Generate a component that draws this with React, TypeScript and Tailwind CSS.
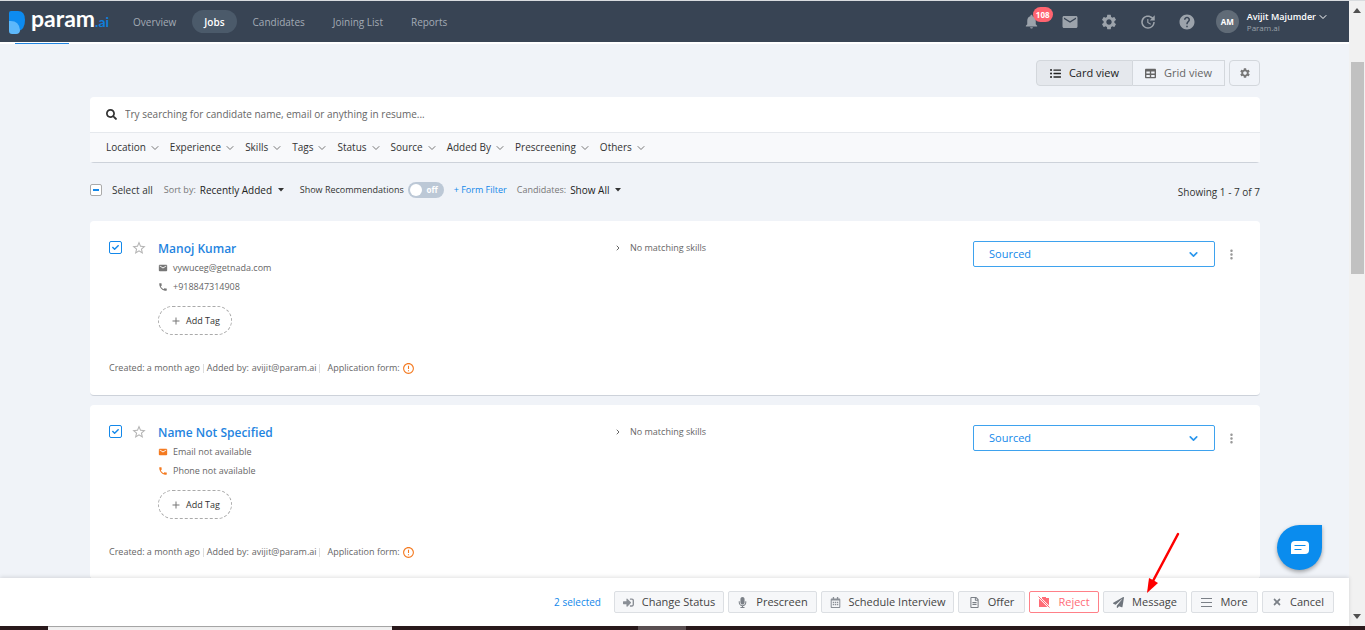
import React from "react";
import {
  MdAdd,
  MdEmail,
  MdErrorOutline,
  MdHelp,
  MdMoreVert,
  MdNotifications,
  MdPhone,
  MdSettings,
  MdStarBorder,
  MdUpdate,
} from "react-icons/md";
import {
  FaCheck,
  FaListUl,
  FaMicrophone,
  FaPaperPlane,
  FaRegCalendarAlt,
  FaRegFileAlt,
  FaSearch,
  FaSignInAlt,
  FaTable,
  FaTimes,
} from "react-icons/fa";
import { FiChevronDown, FiChevronRight } from "react-icons/fi";

const navItems = ["Overview", "Jobs", "Candidates", "Joining List", "Reports"];

const filters = [
  "Location",
  "Experience",
  "Skills",
  "Tags",
  "Status",
  "Source",
  "Added By",
  "Prescreening",
  "Others",
];

type Candidate = {
  id: string;
  name: string;
  email?: string;
  phone?: string;
};

const candidates: Candidate[] = [
  { id: "c1", name: "Manoj Kumar", email: "vywuceg@getnada.com", phone: "+918847314908" },
  { id: "c2", name: "Name Not Specified" },
];

function Logo() {
  return (
    <a href="#home" className="flex h-full w-[102px] shrink-0 items-center" aria-label="param.ai">
      <svg width="17" height="24" viewBox="0 0 17 24" className="mt-[2px] shrink-0" aria-hidden="true">
        <path d="M0 2Q0 0 2 0H9Q16 0 16 9Q16 19 9 20H0Z" fill="#0d8bf0" />
        <path d="M0 10Q10 9 11 19Q11 23 7 23H3Q0 23 0 20Z" fill="#5db8fb" />
      </svg>
      <span className="mb-1 ml-[5px] flex items-baseline font-[Lato,sans-serif] leading-6 text-white">
        <span className="text-[23px] font-bold">param</span>
        <span className="text-[14px] font-bold text-[#0f7fdb]">.ai</span>
      </span>
    </a>
  );
}

function Header() {
  return (
    <header className="flex h-[41px] shrink-0 items-center bg-[#384454] pr-5 pl-[9px]">
      <Logo />
      <nav className="ml-[10px] flex items-center gap-1">
        {navItems.map((item) => (
          <a
            key={item}
            href={"#" + item}
            className={
              item === "Jobs"
                ? "rounded-full bg-[#4b5a6a] px-3 pt-[5px] pb-[3px] text-[10px] leading-[15px] font-semibold text-white"
                : "px-3 pt-[5px] pb-[3px] text-[10px] leading-[15px] text-[#a3abb4]"
            }
          >
            {item}
          </a>
        ))}
      </nav>
      <div className="ml-auto flex items-center text-[#9ca3ab]">
        <button aria-label="Notifications" className="relative mr-[21px]">
          <MdNotifications size={17} />
          <span className="absolute -top-[6px] left-[10px] rounded-full bg-[#ff6470] px-[3px] text-[8px] leading-[15px] font-bold text-white">
            108
          </span>
        </button>
        <button aria-label="Mail" className="mr-[21px]">
          <MdEmail size={18} />
        </button>
        <button aria-label="Settings" className="mr-[21px]">
          <MdSettings size={18} />
        </button>
        <button aria-label="Recent" className="mr-[21px]">
          <MdUpdate size={18} />
        </button>
        <button aria-label="Help" className="mr-[20px]">
          <MdHelp size={18} />
        </button>
        <button className="flex items-center text-left">
          <span className="flex size-[23px] items-center justify-center rounded-full bg-[#606b77] text-[8px] font-bold text-white">
            AM
          </span>
          <span className="ml-2 flex flex-col">
            <span className="flex items-center gap-px text-[9px] leading-3 font-semibold text-white">
              Avijit Majumder <FiChevronDown size={12} />
            </span>
            <span className="text-[8px] leading-[10px]">Param.ai</span>
          </span>
        </button>
      </div>
    </header>
  );
}

function ViewSwitch() {
  return (
    <div className="flex justify-end pt-4">
      <button className="flex h-[26px] w-[97px] items-center justify-center gap-2 rounded-l-sm border border-[#d3d7dc] bg-[#e5e8ed] text-[11px] text-[#222]">
        <FaListUl size={11} /> Card view
      </button>
      <button className="flex h-[26px] w-[92px] items-center justify-center gap-2 border border-l-0 border-[#d3d7dc] text-[11px] text-[#666]">
        <FaTable size={11} /> Grid view
      </button>
      <button
        aria-label="View settings"
        className="ml-1 flex h-[26px] w-[31px] items-center justify-center rounded-sm border border-[#d3d7dc] text-[#777]"
      >
        <MdSettings size={12} />
      </button>
    </div>
  );
}

function SearchPanel() {
  return (
    <section className="mt-[11px] rounded-sm border-b border-[#cdd2da] bg-white">
      <label className="flex h-[35px] items-center gap-2 pl-4">
        <FaSearch size={11} className="text-[#333]" aria-hidden="true" />
        <input
          type="text"
          aria-label="Search candidates"
          placeholder="Try searching for candidate name, email or anything in resume..."
          className="flex-1 bg-transparent text-[10px] outline-none placeholder:text-[#666]"
        />
      </label>
      <div className="flex h-[30px] items-center gap-[9px] border-t border-[#e6e9ed] bg-[#f8f9fb] pl-4">
        {filters.map((f) => (
          <button key={f} className="flex items-center gap-[3px] text-[10px] text-[#333]">
            {f} <FiChevronDown size={12} className="text-[#777]" />
          </button>
        ))}
      </div>
    </section>
  );
}

function Caret() {
  return (
    <svg width="6" height="4" viewBox="0 0 6 4" className="ml-px" aria-hidden="true">
      <path d="M0 0H6L3 3.5Z" fill="#333" />
    </svg>
  );
}

function ListControls() {
  return (
    <div className="flex h-[58px] items-center pb-1 text-[10px] text-[#333]">
      <label className="flex items-center gap-[10px] text-[10px]">
        <span className="relative flex size-3">
          <input
            type="checkbox"
            className="size-3 appearance-none rounded-[2px] border border-[#aaa] bg-white"
          />
          <span className="pointer-events-none absolute top-[5px] left-[3px] h-[2px] w-[6px] bg-[#1388ea]" />
        </span>
        Select all
      </label>
      <label className="ml-[11px] flex items-center gap-1 text-[9px] text-[#777]">
        Sort by:
        <select className="appearance-none text-[10px] text-[#222]">
          <option>Recently Added</option>
        </select>
        <Caret />
      </label>
      <label className="ml-4 flex items-center gap-1 text-[9px]">
        Show Recommendations
        <span className="relative flex">
          <input type="checkbox" role="switch" className="h-4 w-9 appearance-none rounded-full bg-[#bcc8d6]" />
          <span className="pointer-events-none absolute top-[2px] left-[2px] size-3 rounded-full bg-white" />
          <span className="pointer-events-none absolute top-0 right-[6px] text-[8px] leading-4 font-bold text-white">
            off
          </span>
        </span>
      </label>
      <button className="ml-[10px] text-[9px] text-[#1388ea]">+ Form Filter</button>
      <label className="ml-[10px] flex items-center gap-1 text-[9px] text-[#777]">
        Candidates:
        <select className="appearance-none text-[10px] text-[#222]">
          <option>Show All</option>
        </select>
        <Caret />
      </label>
      <span className="ml-auto pt-1">Showing 1 - 7 of 7</span>
    </div>
  );
}

function CandidateCard({ candidate }: { candidate: Candidate }) {
  const iconColor = candidate.email ? "text-[#777]" : "text-[#f47a20]";
  return (
    <article className="flex h-[175px] shrink-0 flex-col rounded-sm border-b border-[#cdd2da] bg-white pt-[19px] pl-[19px]">
      <div className="flex items-start">
        <span className="relative mt-px flex size-[13px]">
          <input
            type="checkbox"
            defaultChecked
            aria-label={"Select " + candidate.name}
            className="size-[13px] appearance-none rounded-[2px] border border-[#1388ea] bg-white"
          />
          <FaCheck size={7} className="pointer-events-none absolute top-[3px] left-[3px] text-[#1388ea]" />
        </span>
        <button aria-label="Favourite" className="ml-[9px] text-[#b5b5b5]">
          <MdStarBorder size={16} />
        </button>
        <div className="mt-px ml-[11px] w-[459px]">
          <h2 className="text-[12px] leading-4 font-semibold text-[#1f84e0]">
            <a href={"#" + candidate.id}>{candidate.name}</a>
          </h2>
          <ul className="mt-[1px] text-[9px] leading-[19px] text-[#666]">
            <li className="flex items-center gap-[5px]">
              <MdEmail size={10} className={iconColor} />
              {candidate.email ?? "Email not available"}
            </li>
            <li className="flex items-center gap-[5px]">
              <MdPhone size={10} className={iconColor} />
              {candidate.phone ?? "Phone not available"}
            </li>
          </ul>
          <button className="mt-[10px] flex h-[29px] w-[74px] items-center justify-center gap-1 rounded-full border border-dashed border-[#aaa] text-[9px] text-[#333]">
            <MdAdd size={12} className="text-[#777]" /> Add Tag
          </button>
        </div>
        <button className="mt-px -ml-[3px] flex items-center gap-2 text-[9px] leading-[14px] text-[#666]">
          <FiChevronRight size={8} strokeWidth={3} /> No matching skills
        </button>
        <div className="mt-px ml-auto flex items-center pr-[21px]">
          <div className="relative flex">
            <select
              aria-label="Candidate status"
              className="h-[26px] w-[242px] appearance-none rounded-xs border border-[#3ea2ee] bg-white pl-[15px] text-[11px] text-[#1388ea]"
            >
              <option>Sourced</option>
            </select>
            <FiChevronDown
              size={13}
              strokeWidth={3}
              className="pointer-events-none absolute top-[7px] right-[15px] text-[#2a96ec]"
            />
          </div>
          <button aria-label="More options" className="ml-[9px] text-[#999]">
            <MdMoreVert size={15} />
          </button>
        </div>
      </div>
      <footer className="mt-[26px] flex items-center text-[9px] leading-[14px] text-[#666]">
        <span>Created: a month ago</span>
        <span className="ml-[3px] flex h-[9px] items-center border-l border-[#ddd] pl-[3px]">Added by:</span>
        <span className="ml-[3px] flex h-[9px] items-center border-r border-[#ddd] pr-[2px]">avijit@param.ai</span>
        <span className="ml-2">Application form:</span>
        <MdErrorOutline size={13} className="ml-[2px] text-[#f47a20]" />
      </footer>
    </article>
  );
}

function RejectIcon() {
  return (
    <svg width="12" height="12" viewBox="0 0 12 12" aria-hidden="true">
      <path d="M4 2V1H8V2H11V9.5L3.5 2Z M1 2.5L9.5 11H1Z" fill="currentColor" />
      <path d="M0.5 0.5L11.5 11.5" stroke="currentColor" strokeWidth="1" />
    </svg>
  );
}

function LinesIcon() {
  return (
    <svg width="11" height="10" viewBox="0 0 11 10" aria-hidden="true">
      <path d="M0 1.500H11M0 5.500H11M0 9.500H11" stroke="#7b8087" strokeWidth="1" />
    </svg>
  );
}

const actionBase =
  "flex h-[22px] shrink-0 items-center justify-center gap-2 rounded-[2px] border text-[11px]";

function ActionBar() {
  const plain = " border-[#dcdfe3] bg-[#f6f7f9] text-[#444]";
  return (
    <div className="relative flex h-12 shrink-0 items-center justify-end gap-1 bg-white pr-[15px] shadow-[0_-1px_4px_rgba(0,0,0,0.12)]">
      <span className="mr-[9px] text-[10px] text-[#1388ea]">2 selected</span>
      <button className={actionBase + plain + " w-[110px]"}>
        <FaSignInAlt size={11} className="text-[#8a8f96]" /> Change Status
      </button>
      <button className={actionBase + plain + " w-[89px]"}>
        <FaMicrophone size={11} className="text-[#7b8087]" /> Prescreen
      </button>
      <button className={actionBase + plain + " w-[133px]"}>
        <FaRegCalendarAlt size={11} className="text-[#8a8f96]" /> Schedule Interview
      </button>
      <button className={actionBase + plain + " w-[67px]"}>
        <FaRegFileAlt size={11} className="text-[#7b8087]" /> Offer
      </button>
      <button className={actionBase + " w-[70px] border-[#ff8088] bg-white text-[#ff6b76]"}>
        <RejectIcon /> Reject
      </button>
      <button className={actionBase + plain + " w-[84px]"}>
        <FaPaperPlane size={11} className="text-[#6f757d]" /> Message
      </button>
      <button className={actionBase + plain + " w-[67px]"}>
        <LinesIcon /> More
      </button>
      <button className={actionBase + plain + " w-[72px]"}>
        <FaTimes size={10} className="text-[#7b8087]" /> Cancel
      </button>
      <svg
        width="36"
        height="64"
        viewBox="0 0 36 64"
        className="pointer-events-none absolute right-[168px] bottom-[31px]"
        aria-hidden="true"
      >
        <path d="M33 3L8 50" stroke="#fe0000" strokeWidth="2.5" strokeLinecap="round" />
        <path d="M2 62L4 47L8 49L13 52Z" fill="#fe0000" />
      </svg>
    </div>
  );
}

function ScrollTrack() {
  return (
    <div className="flex w-4 shrink-0 flex-col items-center bg-[#f1f1f1] py-[7px]" aria-hidden="true">
      <svg width="8" height="5" viewBox="0 0 8 5">
        <path d="M0 5L4 0L8 5Z" fill="#505050" />
      </svg>
      <div className="mt-[49px] h-[212px] w-[13px] bg-[#c1c1c1]" />
      <svg width="8" height="5" viewBox="0 0 8 5" className="mt-auto">
        <path d="M0 0L4 5L8 0Z" fill="#505050" />
      </svg>
    </div>
  );
}

export default function App() {
  return (
    <div className="flex h-screen flex-col overflow-hidden border-t border-[#d9dcdf] bg-[#f0f3f8] font-['Open_Sans','Noto_Sans',sans-serif]">
      <div className="flex min-h-0 flex-1">
        <div className="relative flex min-w-0 flex-1 flex-col">
          <Header />
          <div className="h-[2px] shrink-0 bg-white pl-[15px]">
            <div className="mt-px h-px w-[54px] bg-[#1f84e0]" />
          </div>
          <main className="min-h-0 flex-1 overflow-hidden pr-[89px] pl-[90px]">
            <ViewSwitch />
            <SearchPanel />
            <ListControls />
            <div className="flex flex-col gap-[9px]">
              {candidates.map((c) => (
                <CandidateCard key={c.id} candidate={c} />
              ))}
            </div>
          </main>
          <ActionBar />
          <button
            aria-label="Open chat"
            className="absolute right-[27px] bottom-14 flex size-[45px] items-center justify-center rounded-full rounded-tr-md bg-[#0a8cee] shadow-[0_2px_4px_rgba(0,0,0,0.35)]"
          >
            <svg width="18" height="14" viewBox="0 0 18 14" aria-hidden="true">
              <path d="M4 0H14Q18 0 18 4V9Q18 13 14 13H0V4Q0 0 4 0Z" fill="#fff" />
              <path d="M3.500 4.500H14.500M3.500 8.500H10.500" stroke="#0a8cee" strokeWidth="1.200" />
            </svg>
          </button>
        </div>
        <ScrollTrack />
      </div>
      <div className="flex h-1 shrink-0 bg-[#2a1a1c]" aria-hidden="true">
        <div className="ml-12 w-[344px] border-t border-[#aaa] bg-[#f1f1f1]" />
        <div className="ml-[246px] w-12 bg-[#5b5052]" />
      </div>
    </div>
  );
}
